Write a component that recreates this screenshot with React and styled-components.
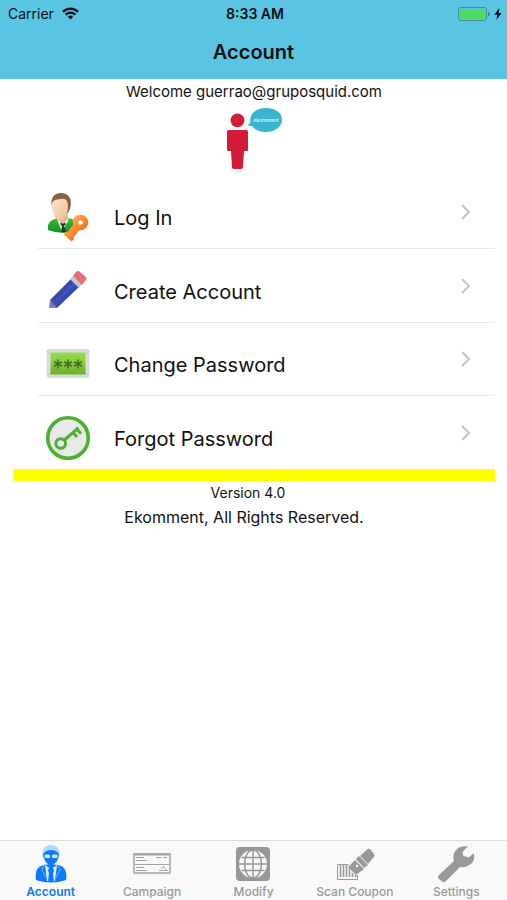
import React from "react";
import styled, { createGlobalStyle } from "styled-components";

const GlobalStyle = createGlobalStyle`
  *, *::before, *::after { box-sizing: border-box; }
  body {
    margin: 0;
    background: #ffffff;
    color: #111111;
    font-family: Inter, "Liberation Sans", sans-serif;
  }
  svg { display: block; flex: none; }
`;

const Screen = styled.div`
  display: flex;
  flex-direction: column;
  min-height: 100vh;
`;

const Header = styled.header`
  background: #5ac5e2;
  color: #0a1013;
`;

const StatusBar = styled.div`
  display: grid;
  grid-template-columns: 1fr auto 1fr;
  align-items: center;
  height: 27px;
  padding: 0 5px 0 8px;
  font-size: 14px;
`;

const StatusGroup = styled.div`
  display: flex;
  align-items: center;
  gap: ${(p) => (p.$end ? "3px" : "8px")};
  justify-content: ${(p) => (p.$end ? "flex-end" : "flex-start")};
`;

const Clock = styled.time`
  font-weight: 600;
`;

const NavTitle = styled.h1`
  margin: 0;
  height: 52px;
  line-height: 50px;
  text-align: center;
  font-size: 20px;
  font-weight: 600;
`;

const Main = styled.main`
  flex: 1;
  padding: 0 12px 0 13px;
`;

const Welcome = styled.p`
  margin: 0;
  line-height: 26px;
  text-align: center;
  font-size: 15px;
`;

const LogoBox = styled.div`
  display: flex;
  justify-content: center;
  height: 71px;
  padding-top: 2px;
`;

const Menu = styled.ul`
  margin: 0;
  padding: 0;
  list-style: none;
  border-bottom: 12px solid #ffff00;
`;

const MenuItem = styled.li`
  margin-left: 25px;
  height: 73px;
  border-bottom: 1px solid #e9e9e9;
  &:nth-child(2) { height: 74px; }
  &:last-child { border-bottom: 0; }
`;

const MenuButton = styled.button`
  display: flex;
  align-items: center;
  width: 100%;
  height: 100%;
  padding: 0 24px 0 4px;
  border: 0;
  background: none;
  color: inherit;
  font: inherit;
  text-align: left;
  cursor: pointer;
`;

const IconSlot = styled.span`
  padding-top: 10px;
`;

const MenuLabel = styled.span`
  flex: 1;
  padding: 12px 0 0 20px;
  font-size: 20px;
  line-height: 24px;
`;

const Notice = styled.p`
  margin: 0;
  padding-right: ${(p) => (p.$wide ? "20px" : "12px")};
  line-height: 24px;
  text-align: center;
  font-size: ${(p) => (p.$wide ? "16px" : "14px")};
`;

const TabBar = styled.nav`
  display: grid;
  grid-template-columns: repeat(5, 1fr);
  height: 60px;
  border-top: 1px solid #dcdcdc;
  background: #f9f9f9;
`;

const Tab = styled.a`
  display: flex;
  flex-direction: column;
  align-items: center;
  padding-top: 3px;
  gap: 1px;
  color: ${(p) => (p.$active ? "#0b7bfd" : "#999999")};
  font-size: 12px;
  line-height: 14px;
  font-weight: ${(p) => (p.$active ? 600 : 500)};
  text-decoration: none;
  white-space: nowrap;
`;

const WifiIcon = () => (
  <svg width="17" height="13" viewBox="0 0 17 13" fill="none" stroke="#0a1013" strokeWidth="2.3" aria-hidden="true">
    <path d="M1 4.9C5.2.4 11.8.4 16 4.9" />
    <path d="M3.7 7.8C6.4 5 10.6 5 13.3 7.8" />
    <path d="M8.5 12.6 5.8 9.7Q8.5 7.5 11.2 9.7Z" fill="#0a1013" stroke="none" />
  </svg>
);

const BatteryIcon = () => (
  <svg width="33" height="14" viewBox="0 0 33 14" aria-hidden="true">
    <rect x=".5" y=".5" width="28" height="13" rx="2.5" fill="none" stroke="#43899c" />
    <rect x="2" y="2" width="25" height="10" rx="1" fill="#4cd964" />
    <path d="M30 4.5Q32 5 32 7T30 9.5Z" fill="#43899c" />
  </svg>
);

const BoltIcon = () => (
  <svg width="8" height="12" viewBox="0 0 8 12" aria-hidden="true">
    <path d="M5.3 0 .4 6.7H3.4L2.3 12 7.6 4.9H4.7Z" fill="#0a1013" />
  </svg>
);

const LogoLabel = styled.text`
  font-size: 5px;
  font-weight: 600;
  fill: #ddf4fa;
`;

const Logo = () => (
  <svg width="58" height="64" viewBox="0 0 58 64" role="img" aria-label="ekomment">
    <g fill="#d41c38">
      <circle cx="12.5" cy="13.3" r="6.9" />
      <path d="M4 23H21Q23 23 23 25V43Q23 44 21.5 44H19L18 60Q18 62 16 62H9Q7 62 7 60L6 44H3.5Q2 44 2 43V25Q2 23 4 23Z" />
    </g>
    <path d="M7 44V33M18 44V33" stroke="#b91934" strokeWidth=".7" />
    <path d="M22 18.4C25 17 25.4 15.5 25.3 12 26 5 33 1 41 1S57 5 57 12.5 50 25 41 25C34 25 29 22 27 19Z" fill="#39b3cf" />
    <LogoLabel x="41" y="15" textAnchor="middle">ekomment</LogoLabel>
  </svg>
);

const LogInIcon = () => (
  <svg width="52" height="52" viewBox="0 0 52 52" aria-hidden="true">
    <defs>
      <linearGradient id="skin" x2="1" y2="1">
        <stop stopColor="#ffe8d1" />
        <stop offset="1" stopColor="#eeb995" />
      </linearGradient>
      <linearGradient id="jacket" x2="0" y2="1">
        <stop stopColor="#42ba2f" />
        <stop offset="1" stopColor="#159126" />
      </linearGradient>
      <linearGradient id="goldKey" x2="1" y2="1">
        <stop stopColor="#ffa04b" />
        <stop offset="1" stopColor="#f27522" />
      </linearGradient>
    </defs>
    <path d="M6 39C5 31 9 29 16 27H26C34 29 38 32 37 39Q22 45 6 39Z" fill="url(#jacket)" />
    <path d="M15 28 20 41 27 28 22 26Z" fill="#f4f4ec" />
    <path d="m20 31-2 2 2 2-1 6h5l-2-6 2-2-2-2Z" fill="#25342b" />
    <path d="M15 22H26V28L21 33 14 27Z" fill="#e7b48f" />
    <path d="M10 16C8 7 12 2 19 2S31 7 28 18L26 22H14Z" fill="#886044" />
    <path d="M10 15C10 8 14 9 19 8 24 7 26 10 26 15 26 23 23 29 18 29 13 28 10 21 10 15Z" fill="url(#skin)" />
    <g fill="none" stroke="url(#goldKey)">
      <circle cx="38.5" cy="31.5" r="5" strokeWidth="5.5" />
      <path d="M34.5 36 26.5 46.5" strokeWidth="8" />
      <path d="m23 42 8 7" strokeWidth="4" />
    </g>
    <path d="M31 28Q33 24 38 24" fill="none" stroke="#ffc28a" />
  </svg>
);

const PencilIcon = () => (
  <svg width="52" height="52" viewBox="0 0 52 52" aria-hidden="true">
    <path d="M7 43 8 35 15 43Z" fill="#7a7cbb" />
    <path d="M8 35 29 14 37 22 15 43Z" fill="#3848ad" />
    <path d="m11 39 22-21" stroke="#4355b8" strokeWidth="2" />
    <path d="M28 14 31 11 40 19 37 23Z" fill="#b8c7e0" />
    <path d="M31 11 34 7Q36 5 38 7L44 12Q45 13 44 15L40 20Z" fill="#e66e74" />
  </svg>
);

const PasswordIcon = () => (
  <svg width="52" height="52" viewBox="0 0 52 52" aria-hidden="true">
    <defs>
      <linearGradient id="panel" x2="0" y2="1">
        <stop stopColor="#9ada4d" />
        <stop offset=".5" stopColor="#83cc3a" />
        <stop offset="1" stopColor="#6cac2b" />
      </linearGradient>
    </defs>
    <rect x="4.5" y="11" width="43" height="29" rx="3" fill="#d9dcdc" />
    <path d="m5 13 4 3M47 13l-4 3M5 38l4-3M47 38l-4-3" stroke="#b8c0c0" />
    <rect x="8.5" y="14.5" width="35" height="22" fill="url(#panel)" />
    <g stroke="#45702a" strokeWidth="1.7">
      <path d="M16 21.5v9M12 23.7l8 4.6M20 23.7l-8 4.6" />
      <path d="M26 21.5v9M22 23.7l8 4.6M30 23.7l-8 4.6" />
      <path d="M36 21.5v9M32 23.7l8 4.6M40 23.7l-8 4.6" />
    </g>
  </svg>
);

const KeyIcon = () => (
  <svg width="52" height="52" viewBox="0 0 52 52" fill="none" stroke="#4cb030" aria-hidden="true">
    <circle cx="26" cy="26" r="20.3" fill="#e8e8e8" strokeWidth="3.6" />
    <circle cx="18.7" cy="31.5" r="4.8" strokeWidth="3" />
    <path d="m22.5 28 14-12.3M31 20.4l4 4.5M35 17.2l4 4.5" strokeWidth="3" />
  </svg>
);

const Chevron = () => (
  <svg width="11" height="16" viewBox="0 0 11 16" fill="none" stroke="#c5c5c8" strokeWidth="2" aria-hidden="true">
    <path d="m2 1 7 7-7 7" />
  </svg>
);

const AccountIcon = () => (
  <svg width="40" height="40" viewBox="0 1 40 40" aria-hidden="true">
    <path d="M5 37Q3 24 13 22L19 21 27 22Q37 24 35 37Q20 42 5 37Z" fill="#0b7bfd" />
    <path d="m14 22 6 4 6-4-2 16h-8Z" fill="#dcecff" />
    <path d="m18 25-1 3 1 2-1 9h6l-1-9 1-2-1-3Z" fill="#0b7bfd" />
    <path d="M13 22 11 27 16 36M27 22l2 5-5 9" fill="none" stroke="#75b4fd" />
    <path d="M12 14C10 7 13 2 20 2S30 7 28 15L25 20 20 22 15 20Z" fill="#b4d7fc" />
    <path d="M12 11Q15 7 20 7T28 11L26 18 20 24 14 18Z" fill="#0b7bfd" />
    <g fill="#d7e9ff" stroke="#0b7bfd">
      <rect x="13" y="11" width="6.5" height="4.6" rx="2" />
      <rect x="20.5" y="11" width="6.5" height="4.6" rx="2" />
    </g>
  </svg>
);

const CampaignIcon = () => (
  <svg width="40" height="40" viewBox="0 0 40 40" fill="none" stroke="#a3a3a3" aria-hidden="true">
    <rect x="2" y="10" width="36" height="19" strokeWidth="1.5" />
    <path d="M2 10.5h36" strokeWidth="2" />
    <path d="M4 13.5h8M4 16.5h11M24 13.5h5M31 13.5h4M3 20.5h34M4 23.5h8M4 26.5h11M27 26.5h9M29 24.5l3-2 2 3" />
  </svg>
);

const GlobeIcon = () => (
  <svg width="40" height="40" viewBox="0 0 40 40" fill="none" aria-hidden="true">
    <rect x="3" y="3" width="34" height="34" rx="4" fill="#979797" />
    <circle cx="20" cy="20" r="14" fill="#f9f9f9" />
    <g stroke="#979797" strokeWidth="1.5">
      <ellipse cx="20" cy="20" rx="8.5" ry="14" />
      <path d="M20 6v28M6 20h28M8.5 13.5h23M8.5 26.5h23" />
    </g>
  </svg>
);

const ScanIcon = () => (
  <svg width="40" height="40" viewBox="0 0 40 40" fill="none" stroke="#999999" aria-hidden="true">
    <path d="M2.5 35.5V20.5h11M2.5 35.5h20V31" />
    <path d="M5.5 20v13M8.5 20v13M11.5 20v13M14.5 24v9M17.5 29v4M20.5 31v2" strokeWidth="1.6" />
    <g fill="#999999" stroke="none">
      <path d="M13 23 20 16 29 25 21 31Z" />
      <path d="m21 15 3-3 9 9-4 3Z" />
      <path d="M25 12 32 5.5Q34 4 35.5 5.5L39 10Q40 12 38.5 13.5L33 20Z" />
    </g>
    <circle cx="22" cy="22" r="1.2" fill="#f9f9f9" stroke="none" />
  </svg>
);

const WrenchIcon = () => (
  <svg width="40" height="40" viewBox="0 0 40 40" aria-hidden="true">
    <path d="M32 2.5Q24 1 20 6 16 11 18 17L3 31Q1 33 3 35L6 37.5Q8 39 10 37L24 23Q31 24 36 19 39 15 38 9L32.5 13.5 27.5 12 26.5 8Z" fill="#999999" />
  </svg>
);

const menuItems = [
  { label: "Log In", Icon: LogInIcon },
  { label: "Create Account", Icon: PencilIcon },
  { label: "Change Password", Icon: PasswordIcon },
  { label: "Forgot Password", Icon: KeyIcon },
];

const tabs = [
  { label: "Account", Icon: AccountIcon, active: true },
  { label: "Campaign", Icon: CampaignIcon },
  { label: "Modify", Icon: GlobeIcon },
  { label: "Scan Coupon", Icon: ScanIcon },
  { label: "Settings", Icon: WrenchIcon },
];

export default function App() {
  return (
    <>
      <GlobalStyle />
      <Screen>
        <Header>
          <StatusBar>
            <StatusGroup>Carrier <WifiIcon /></StatusGroup>
            <Clock>8:33 AM</Clock>
            <StatusGroup $end><BatteryIcon /><BoltIcon /></StatusGroup>
          </StatusBar>
          <NavTitle>Account</NavTitle>
        </Header>
        <Main>
          <Welcome>Welcome guerrao@gruposquid.com</Welcome>
          <LogoBox><Logo /></LogoBox>
          <Menu>
            {menuItems.map(({ label, Icon }) => (
              <MenuItem key={label}>
                <MenuButton type="button">
                  <IconSlot><Icon /></IconSlot>
                  <MenuLabel>{label}</MenuLabel>
                  <Chevron />
                </MenuButton>
              </MenuItem>
            ))}
          </Menu>
          <Notice>Version 4.0</Notice>
          <Notice $wide>Ekomment, All Rights Reserved.</Notice>
        </Main>
        <TabBar aria-label="Main">
          {tabs.map(({ label, Icon, active }) => (
            <Tab key={label} href={`#${label.toLowerCase().replace(" ", "-")}`} $active={active} aria-current={active ? "page" : undefined}>
              <Icon />
              {label}
            </Tab>
          ))}
        </TabBar>
      </Screen>
    </>
  );
}
